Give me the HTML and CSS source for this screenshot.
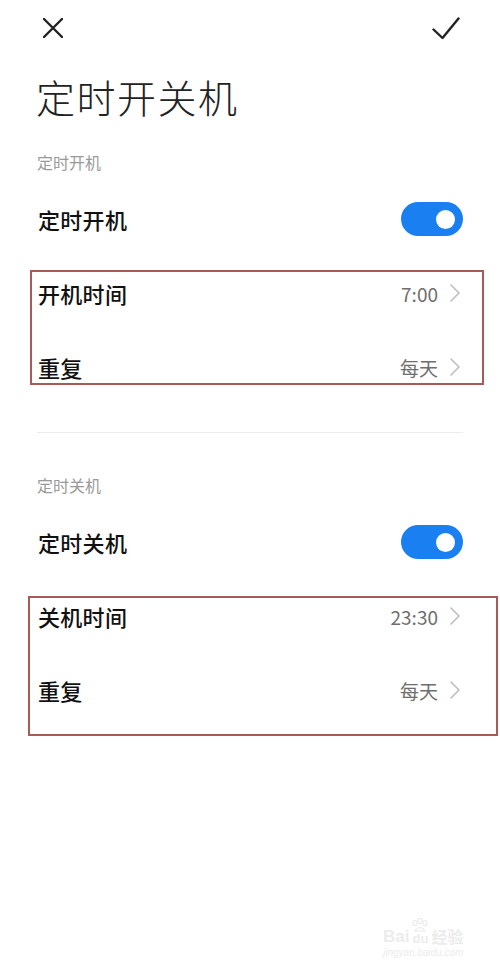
FILE: index.html
```html
<!DOCTYPE html>
<html lang="zh-CN">
<head>
<meta charset="utf-8">
<title>定时开关机</title>
<link rel="stylesheet" href="styles.css">
</head>
<body>
<div class="page">
  <header class="topbar">
    <svg class="icon-close" width="20" height="20" viewBox="0 0 20 20" aria-hidden="true">
      <path d="M1 1 L19 19 M19 1 L1 19" fill="none" stroke="#222" stroke-width="2.4" stroke-linecap="round"/>
    </svg>
    <svg class="icon-check" width="28" height="23" viewBox="0 0 28 23" aria-hidden="true">
      <path d="M1.5 12.5 L10.5 21 L26.5 1.5" fill="none" stroke="#222" stroke-width="2.4" stroke-linecap="round" stroke-linejoin="round"/>
    </svg>
  </header>

  <h1 class="title">定时开关机</h1>

  <section class="section">
    <div class="section-label">定时开机</div>
    <div class="row">
      <span class="row-label">定时开机</span>
      <span class="switch on"><span class="knob"></span></span>
    </div>
    <div class="group group-on">
      <div class="row">
        <span class="row-label">开机时间</span>
        <span class="row-value"><span class="value">7:00</span><svg class="chev" width="10" height="18" viewBox="0 0 10 18" aria-hidden="true"><path d="M1 1 L9 9 L1 17" fill="none" stroke="#bdbdbd" stroke-width="1.6" stroke-linecap="round" stroke-linejoin="round"/></svg></span>
      </div>
      <div class="row">
        <span class="row-label">重复</span>
        <span class="row-value"><span class="value">每天</span><svg class="chev" width="10" height="18" viewBox="0 0 10 18" aria-hidden="true"><path d="M1 1 L9 9 L1 17" fill="none" stroke="#bdbdbd" stroke-width="1.6" stroke-linecap="round" stroke-linejoin="round"/></svg></span>
      </div>
    </div>
  </section>

  <div class="divider"></div>

  <section class="section section-off">
    <div class="section-label">定时关机</div>
    <div class="row">
      <span class="row-label">定时关机</span>
      <span class="switch on"><span class="knob"></span></span>
    </div>
    <div class="group group-off">
      <div class="row">
        <span class="row-label">关机时间</span>
        <span class="row-value"><span class="value">23:30</span><svg class="chev" width="10" height="18" viewBox="0 0 10 18" aria-hidden="true"><path d="M1 1 L9 9 L1 17" fill="none" stroke="#bdbdbd" stroke-width="1.6" stroke-linecap="round" stroke-linejoin="round"/></svg></span>
      </div>
      <div class="row">
        <span class="row-label">重复</span>
        <span class="row-value"><span class="value">每天</span><svg class="chev" width="10" height="18" viewBox="0 0 10 18" aria-hidden="true"><path d="M1 1 L9 9 L1 17" fill="none" stroke="#bdbdbd" stroke-width="1.6" stroke-linecap="round" stroke-linejoin="round"/></svg></span>
      </div>
    </div>
  </section>

  <div class="watermark" aria-hidden="true">
    <div class="wm-logo">
      <span class="wm-bai">Bai</span>
      <span class="wm-du">
        <svg class="wm-paw" width="18" height="14" viewBox="0 0 18 14"><g fill="none" stroke="#ececec" stroke-width="1.2"><ellipse cx="4" cy="5" rx="2" ry="2.6"/><ellipse cx="9" cy="3" rx="2" ry="2.6"/><ellipse cx="14" cy="5" rx="2" ry="2.6"/><path d="M4 13 Q9 6 14 13 Z"/></g></svg>
        du
      </span>
      <span class="wm-jy">经验</span>
    </div>
    <div class="wm-url">jingyan.baidu.com</div>
  </div>
</div>
</body>
</html>
```

FILE: styles.css
```css
* { box-sizing: border-box; }

html, body {
  margin: 0;
  padding: 0;
  background: #ffffff;
}

body {
  font-family: "Noto Sans CJK SC", "Noto Sans", "Liberation Sans", sans-serif;
  color: #111;
}

.page {
  position: relative;
  width: 500px;
  height: 974px;
  overflow: hidden;
}

.topbar {
  height: 56px;
  display: flex;
  align-items: center;
  justify-content: space-between;
  padding: 0 40px 0 43px;
}

.icon-close { display: block; }
.icon-check { display: block; margin-top: 1px; }

.title {
  margin: 0;
  padding: 15px 0 0 36px;
  font-size: 39px;
  line-height: 50px;
  font-weight: 300;
  color: #222;
  letter-spacing: 1.5px;
}

.section { margin-top: 29px; }
.section-off { margin-top: 40px; }

.section-label {
  padding-left: 37px;
  font-size: 16px;
  line-height: 24px;
  color: #9a9a9a;
  margin-bottom: 9px;
}

.row {
  height: 74px;
  display: flex;
  align-items: center;
  justify-content: space-between;
  padding: 0 37px 2px 38px;
}

.row-label {
  font-size: 22px;
  font-weight: 500;
  color: #111;
  letter-spacing: 0.3px;
}

.row-value {
  display: flex;
  align-items: center;
  gap: 12px;
  padding-right: 3px;
}

.value {
  font-size: 19px;
  color: #6e6e6e;
}

.chev { display: block; }

.switch {
  width: 62px;
  height: 34px;
  border-radius: 17px;
  background: #1a7ff0;
  display: flex;
  align-items: center;
  justify-content: flex-end;
  padding-right: 8px;
}

.knob {
  width: 19px;
  height: 19px;
  border-radius: 50%;
  background: #fff;
}

.group { position: relative; }

.group::after {
  content: "";
  position: absolute;
  border: 2px solid #a95a57;
  pointer-events: none;
}

.group-on::after {
  top: 13px;
  bottom: 20px;
  left: 30px;
  right: 16px;
}

.group-off::after {
  top: 16px;
  bottom: -8px;
  left: 28px;
  right: 2px;
}

.divider {
  margin: 27px 37px 0 37px;
  height: 1px;
  background: #ececec;
}

.watermark {
  position: absolute;
  left: 383px;
  top: 918px;
  color: #ececec;
  font-family: "Liberation Sans", sans-serif;
}

.wm-logo {
  display: flex;
  align-items: flex-end;
  gap: 2px;
  font-size: 17px;
  font-weight: 700;
  line-height: 17px;
}

.wm-du {
  display: flex;
  flex-direction: column;
  align-items: center;
  font-size: 13px;
  line-height: 13px;
}

.wm-paw { display: block; }

.wm-jy {
  font-family: "Noto Sans CJK SC", sans-serif;
  font-size: 16px;
  line-height: 17px;
}

.wm-url {
  margin-top: 3px;
  font-size: 10px;
  line-height: 10px;
  font-style: italic;
}
```
